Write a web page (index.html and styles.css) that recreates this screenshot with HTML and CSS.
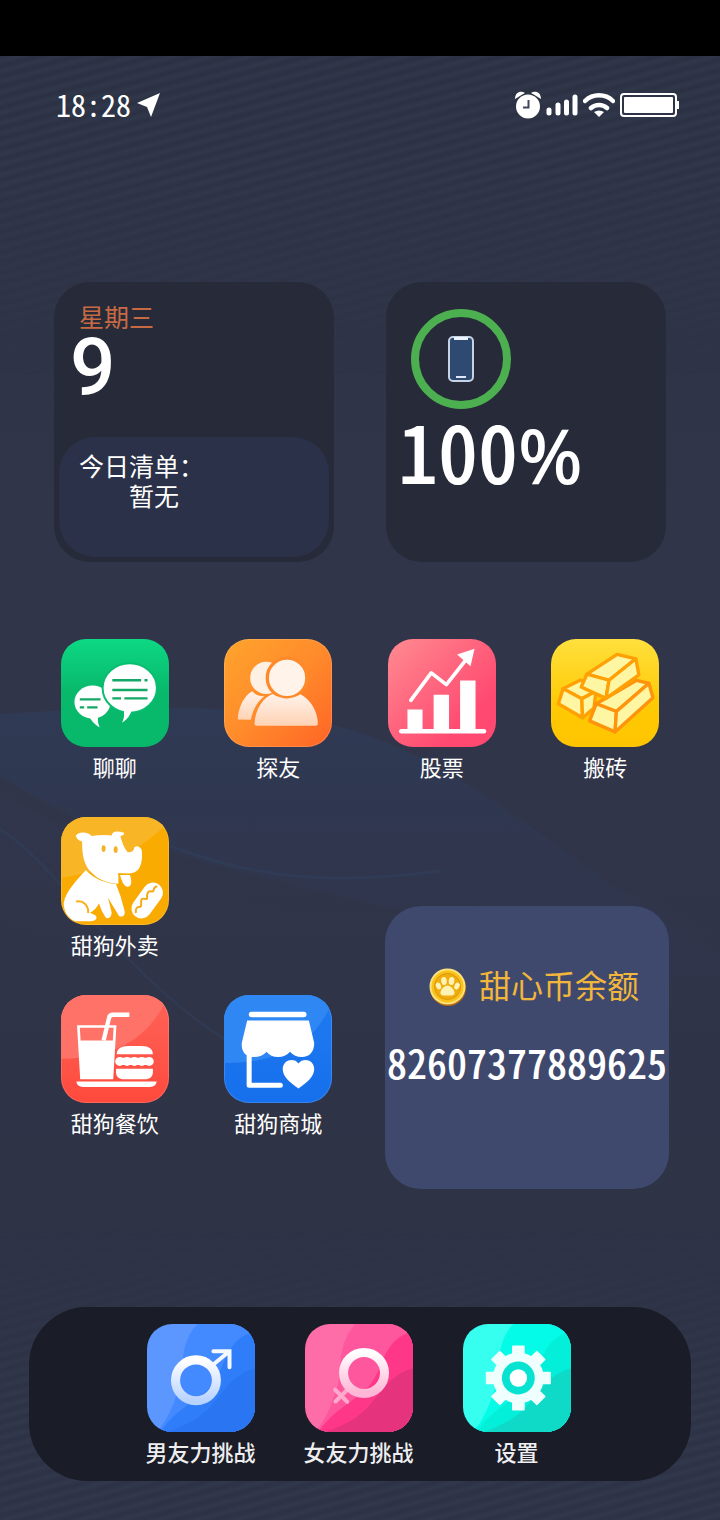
FILE: index.html
```
<!DOCTYPE html>
<html lang="zh-CN">
<head>
  <meta charset="UTF-8">
  <meta name="viewport" content="width=device-width, initial-scale=1.0">
  <title>手机桌面</title>
  <link rel="stylesheet" href="styles.css">
</head>
<body>
  <div class="notch"></div>
  <div class="screen">
    <!-- wallpaper -->
    <svg class="waves" viewBox="0 0 720 1464" preserveAspectRatio="none" aria-hidden="true">
      <defs>
        <linearGradient id="wave" x1="0" y1="0" x2="0" y2="1">
          <stop offset="0" stop-color="#2c4163" stop-opacity=".4"/>
          <stop offset="1" stop-color="#2c3a5c" stop-opacity="0"/>
        </linearGradient>
      </defs>
      <path d="M0 658C120 652 270 640 380 684S560 800 720 900V960C520 850 180 840 0 720Z" fill="url(#wave)"/>
      <path d="M0 735C110 800 230 870 390 860S580 790 720 880V1000C480 940 260 1040 0 860Z" fill="url(#wave)" opacity=".25"/>
      <path d="M0 773C60 810 120 920 235 990" fill="none" stroke="#34547a" stroke-opacity=".18" stroke-width="3"/>
      <path d="M170 790C260 825 340 828 440 815" fill="none" stroke="#34547a" stroke-opacity=".18" stroke-width="3"/>
    </svg>

    <header class="status">
      <span class="time">18:28</span>
      <svg class="locate" width="24" height="24" viewBox="0 0 24 24"><path d="M23 0 0 10l10 4 4 10z" fill="#fff"/></svg>
      <div class="signals">
        <svg width="26" height="28" viewBox="0 0 26 28">
          <path d="M0 8C0 1 6-1 10 2zM26 8C26 1 20-1 16 2z" fill="#fff"/>
          <circle cx="13" cy="15.500" r="13" fill="#2d3243"/>
          <circle cx="13" cy="15.500" r="12" fill="#fff"/>
          <path d="M13.500 9v7.500H8" fill="none" stroke="#42475b" stroke-width="2"/>
        </svg>
        <svg width="32" height="24" viewBox="0 0 32 24" stroke="#fff" stroke-width="5" stroke-linecap="round">
          <path d="M3 17v3M12 12v8M20.500 9v11M29 4v16"/>
        </svg>
        <svg width="32" height="26" viewBox="0 0 32 26">
          <path d="M2 9a20 20 0 0 1 28 0M8 16a12 12 0 0 1 16 0" fill="none" stroke="#fff" stroke-width="4.500" stroke-linecap="round"/>
          <path d="m16 25-5-5q5-3 10 0z" fill="#fff"/>
        </svg>
        <svg width="60" height="24" viewBox="0 0 60 24">
          <rect x="1" y="1" width="55" height="22" rx="3" fill="none" stroke="#fff" stroke-width="2"/>
          <rect x="4" y="4" width="49" height="16" rx="1" fill="#fff"/>
          <path d="M57 8h2v8h-2z" fill="#fff"/>
        </svg>
      </div>
    </header>

    <section class="widgets">
      <div class="card">
        <div class="weekday">星期三</div>
        <div class="day">9</div>
        <div class="todo">
          <div>今日清单：</div>
          <div class="todo-item">暂无</div>
        </div>
      </div>
      <div class="card">
        <div class="ring">
          <svg width="26" height="46" viewBox="0 0 26 46">
            <rect x="1" y="1" width="24" height="44" rx="4" fill="#2f4a70" stroke="#c5d3e5" stroke-width="2"/>
            <path d="M6 2.500h14" stroke="#eef4ff" stroke-width="3"/>
            <path d="M8 41h10" stroke="#dce9fa" stroke-width="2"/>
          </svg>
        </div>
        <div class="percent">100<span class="sign">%</span></div>
      </div>
    </section>

    <main class="apps">
      <button class="app">
        <svg class="tile green" viewBox="64 57 322 322">
          <ellipse cx="158" cy="245" rx="54" ry="49" fill="#fff"/>
          <path d="M148 288q8 18 31 33-7-17-5-35z" fill="#fff"/>
          <ellipse cx="269" cy="203" rx="81" ry="74" fill="#fff" stroke="#09bd70" stroke-width="6"/>
          <path d="M250 264q6 22-4 43 24-15 30-41z" fill="#fff"/>
          <path d="M217 180h86M313 180h9M217 209h105M217 234h26M253 234h69M120 237h62M120 261h13M142 261h31" stroke="#14a765" stroke-width="7"/>
        </svg>
        <span>聊聊</span>
      </button>
      <button class="app">
        <svg class="tile orange" viewBox="552 57 322 322">
          <defs>
            <linearGradient id="body" x1="0" y1="0" x2="0" y2="1">
              <stop offset="0" stop-color="#fff3ea"/>
              <stop offset="1" stop-color="#ffd2b4"/>
            </linearGradient>
          </defs>
          <circle cx="678" cy="173" r="48" fill="#fff0e4"/>
          <path d="M593 297c2-42 22-72 43-84 9 10 19 15 36 15-22 17-35 42-40 70z" fill="url(#body)"/>
          <circle cx="740" cy="173" r="59" fill="#fff3ea" stroke="#ff8a2c" stroke-width="10"/>
          <path d="M643 310c2-44 26-79 54-89q43 26 83 1c33 17 52 56 52 88q0 6-8 6H650q-7 0-7-6z" fill="url(#body)"/>
        </svg>
        <span>探友</span>
      </button>
      <button class="app">
        <svg class="tile rose" viewBox="57 57 322 322">
          <path d="M115 267h45v62h-45zM193 223h46v106h-46zM272 181h46v148h-46z" fill="#fff"/>
          <path d="M97 332h246" stroke="#fff" stroke-width="14" stroke-linecap="round"/>
          <path d="m125 240 61-82 45 35 63-80" fill="none" stroke="#fff" stroke-width="11" stroke-linecap="round" stroke-linejoin="round"/>
          <path d="m315 86-52 17 40 35z" fill="#fff"/>
        </svg>
        <span>股票</span>
      </button>
      <button class="app">
        <svg class="tile gold" viewBox="543 57 322 322" fill="#fff6a3" stroke="#ffa005" stroke-width="10" stroke-linejoin="round">
          <path d="m579 205 52-26 44 34-40 22z"/>
          <path d="m579 205 56 30 2 57-72-42z"/>
          <path d="m635 235 42-22-6 50-34 29z"/>
          <g stroke="#ff930c">
            <path d="m678 250 120-70 37 9-97 84z"/>
            <path d="m678 250 60 23-4 61-76-33z"/>
            <path d="m738 273 97-84 12 43-113 102z"/>
          </g>
          <path d="m650 162 90-59 56 13-80 64z"/>
          <path d="m650 162 66 18-9 54-74-34z"/>
          <path d="m716 180 80-64 9 48-98 70z"/>
        </svg>
        <span>搬砖</span>
      </button>
      <button class="app">
        <svg class="tile amber" viewBox="64 51 322 322">
          <path d="M64 51h322v19C260 170 215 210 64 232z" fill="#f8b626"/>
          <path d="M108 106q12-14 38-6l10 8q30-6 59-2 2-18 37-8 2 7-11 10c7 25 12 37 22 48 12 1 19-5 20-15q11-7 21 6c4 24 1 44-8 58-13 17-36 16-61 14v31c-32-1-58-10-81-34-20-20-28-50-27-92q-15-3-19-18z" fill="#fff"/>
          <path d="m237 221 34 1c10 28 2 39-8 40-14-2-19-17-26-41z" fill="#fff" stroke="#faab02" stroke-width="4"/>
          <path d="M138 210c27 26 52 37 90 41q16 38 26 82c1 16-10 17-17 13l-33-54 11 44c-1 18-13 19-18 15q-13-20-20-43c-8 16-16 23-27 28l17 9c8 10-2 17-14 17h-46c-23-10-35-31-35-54 6-34 38-68 66-98z" fill="#fff"/>
          <path d="M111 303c20-4 35 13 34 32" fill="none" stroke="#f9b01c" stroke-width="6" stroke-linecap="round"/>
          <ellipse cx="191" cy="145" rx="6" ry="10" fill="#f6b226"/>
          <ellipse cx="227" cy="148" rx="6" ry="10" fill="#f6b226"/>
          <rect x="262" y="270" width="118" height="60" rx="30" transform="rotate(-54 321 300)" fill="#fff"/>
          <path d="M287 335c-1-26 16-8 16-22s-2-20 10-18 6-2 8-12 5-12 14-10 1-12 14-15" fill="none" stroke="#f5ab17" stroke-width="6" stroke-linecap="round"/>
        </svg>
        <span>甜狗外卖</span>
      </button>
      <button class="app food">
        <svg class="tile red" viewBox="64 42 322 322">
          <path d="M64 42h322c-30 60-90 190-322 190z" fill="#ff7267"/>
          <path d="m116 136 9 153h91l9-153z" fill="none" stroke="#fff" stroke-width="8"/>
          <path d="M119 178h103l-5 112h-92z" fill="#fff"/>
          <path d="m191 178 16-67q2-10 12-10h49" fill="none" stroke="#fff" stroke-width="13"/>
          <path d="M230 219c0-17 14-25 34-25h40c22 0 34 9 34 25zM228 262h110v10c0 13-10 21-24 21h-62c-15 0-24-8-24-21z" fill="#fff"/>
          <path d="M238 240h88" stroke="#fff" stroke-width="22"/>
          <path d="M239 240h89" stroke="#fff" stroke-width="27" stroke-linecap="round" stroke-dasharray="0 22"/>
          <path d="M110 300h239c-1 10-8 16-20 16H130c-12 0-19-6-20-16z" fill="#fff"/>
        </svg>
        <span>甜狗餐饮</span>
      </button>
      <button class="app mall">
        <svg class="tile blue" viewBox="552 42 322 322">
          <path d="M552 42h322v20C820 200 700 245 552 245z" fill="#2f87f3"/>
          <path d="M634 100h156" stroke="#fff" stroke-width="16" stroke-linecap="round"/>
          <path d="M621 118h184l16 67c0 26-14 42-37 42q-22 0-35-16-14 16-36 16t-34-16q-14 16-38 16c-26 0-38-18-36-42z" fill="#fff"/>
          <path d="M627 220v91h93" fill="none" stroke="#fff" stroke-width="15" stroke-linecap="round" stroke-linejoin="round"/>
          <path d="M774 321c-25-17-47-35-47-58 0-28 34-36 47-17 14-19 47-11 47 17 0 23-22 41-47 58z" fill="#fff"/>
        </svg>
        <span>甜狗商城</span>
      </button>

      <div class="balance">
        <div class="balance-title">
          <svg width="38" height="38" viewBox="0 0 38 38">
            <circle cx="19" cy="20" r="18" fill="#b46a12"/>
            <circle cx="18.500" cy="18.500" r="18" fill="#fde27a"/>
            <circle cx="18.500" cy="18.500" r="16" fill="#f8c21b"/>
            <circle cx="18.500" cy="18.500" r="13" fill="#f0ad0e" stroke="#dd930c"/>
            <g fill="#fff2b5">
              <ellipse cx="9.500" cy="18" rx="2.500" ry="3.500" transform="rotate(-25 9.500 18)"/>
              <ellipse cx="15" cy="13" rx="2.800" ry="4" transform="rotate(-8 15 13)"/>
              <ellipse cx="22.500" cy="13" rx="2.800" ry="4" transform="rotate(8 22.500 13)"/>
              <ellipse cx="28" cy="18" rx="2.500" ry="3.500" transform="rotate(25 28 18)"/>
              <path d="M18.500 17.500c3 0 7 4 7 7.500 0 3-4 2.500-7 2.500s-7 .5-7-2.500c0-3.500 4-7.500 7-7.500z"/>
            </g>
          </svg>
          <span>甜心币余额</span>
        </div>
        <div class="balance-value">82607377889625</div>
      </div>
    </main>

    <nav class="dock">
      <button class="app">
        <svg class="tile boy" viewBox="0 0 322 322">
          <defs>
            <linearGradient id="boyRing" x1="0" y1="0" x2="0" y2="1">
              <stop offset="0" stop-color="#fff"/>
              <stop offset="1" stop-color="#b9d3ff"/>
            </linearGradient>
            <path id="bandA" d="M150 0C85 70 120 150 85 220 70 265 50 300 30 322H322V0Z"/>
            <path id="bandB" d="M322 22C215 50 245 150 165 210 110 250 75 270 40 322H322Z"/>
            <path id="bandC" d="M322 133C240 150 215 240 150 280Q110 305 60 322H322Z"/>
          </defs>
          <use href="#bandA" fill="#4389ff"/>
          <use href="#bandB" fill="#307df9"/>
          <use href="#bandC" fill="#2975f2"/>
          <circle cx="146" cy="168" r="61" fill="none" stroke="url(#boyRing)" stroke-width="27"/>
          <path d="m195 123 50-41M198 81h48v48" fill="none" stroke="#f4f8ff" stroke-width="12" stroke-linecap="round"/>
        </svg>
        <span>男友力挑战</span>
      </button>
      <button class="app">
        <svg class="tile girl" viewBox="0 0 322 322">
          <defs>
            <linearGradient id="girlRing" x1="0" y1="0" x2="0" y2="1">
              <stop offset="0" stop-color="#fff"/>
              <stop offset="1" stop-color="#ffb5d5"/>
            </linearGradient>
          </defs>
          <use href="#bandA" fill="#ff579d"/>
          <use href="#bandB" fill="#ff3788"/>
          <use href="#bandC" fill="#e5347d"/>
          <path d="m131 191-40 40M90 196l36 36" stroke="#ffa9cd" stroke-width="12" stroke-linecap="round"/>
          <circle cx="176" cy="146" r="61" fill="none" stroke="url(#girlRing)" stroke-width="27"/>
        </svg>
        <span>女友力挑战</span>
      </button>
      <button class="app">
        <svg class="tile mint" viewBox="0 0 322 322">
          <defs>
            <path id="teeth" d="M146 94V66q0-2 3-2h32q3 0 3 2v28zM146 228v28q0 2 3 2h32q3 0 3-2v-28zM98 142H70q-2 0-2 3v32q0 3 2 3h28zM232 142h28q2 0 2 3v32q0 3-2 3h-28z"/>
          </defs>
          <use href="#bandA" fill="#04fbe7"/>
          <use href="#bandB" fill="#03efda"/>
          <use href="#bandC" fill="#0fdac8"/>
          <g fill="#effffd">
            <use href="#teeth"/>
            <use href="#teeth" transform="rotate(45 165 161)"/>
            <circle cx="165" cy="161" r="76"/>
          </g>
          <circle cx="165" cy="161" r="49" fill="#07e3d0"/>
          <circle cx="165" cy="161" r="26" fill="#fff"/>
        </svg>
        <span>设置</span>
      </button>
    </nav>
  </div>
</body>
</html>
```

FILE: styles.css
```
* { box-sizing: border-box; }
body {
  margin: 0;
  min-height: 100vh;
  display: flex;
  flex-direction: column;
  font-family: "Liberation Sans", "Noto Sans CJK SC", sans-serif;
  background-color: #2e3346;
  color: white;
}
.notch {
  height: 56px;
  background-color: #000;
}
.screen {
  flex: 1;
  display: flex;
  flex-direction: column;
  position: relative;
  isolation: isolate;
  background: linear-gradient(#2b3142, #31354a 30%, #31354a 50%, #2e3346 75%, #2d3245);
}
/* fine diagonal lines, fading out towards the middle */
.screen::before {
  content: "";
  position: absolute;
  inset: 0;
  z-index: -1;
  background: repeating-linear-gradient(165deg, rgba(80, 95, 125, 0) 0, rgba(80, 95, 125, 0.14) 5px, rgba(80, 95, 125, 0) 10px);
  mask-image: linear-gradient(#000 8%, transparent 22%, transparent 80%, #000 92%);
}
.waves {
  position: absolute;
  inset: 0;
  width: 100%;
  height: 100%;
  z-index: -1;
}
.status {
  display: flex;
  align-items: center;
  height: 98px;
  padding: 0 40px 0 56px;
}
.time, .percent, .balance-value {
  font-family: "Noto Sans CJK SC", sans-serif;
  font-feature-settings: "hwid";
}
.time {
  font-size: 30px;
  line-height: 40px;
  padding-bottom: 2px;
}
.locate {
  margin-left: 6px;
}
.signals {
  margin-left: auto;
  display: flex;
  align-items: center;
  gap: 5px;
}
.widgets {
  display: flex;
  justify-content: center;
  gap: 52px;
  margin-top: 128px;
}
.card {
  display: flex;
  flex-direction: column;
  width: 280px;
  height: 280px;
  border-radius: 36px;
  background-color: #272a38;
}
.weekday {
  margin: 21px 25px 0;
  font-size: 25px;
  line-height: 30px;
  color: #c76a43;
}
.day {
  padding-left: 16px;
  font-family: Roboto, sans-serif;
  font-size: 80px;
  font-weight: 500;
  line-height: 70px;
}
.todo {
  height: 120px;
  margin: auto 5px 5px;
  padding: 15px 20px;
  border-radius: 36px;
  background-color: #2b3148;
  font-size: 25px;
  line-height: 30px;
}
.todo-item {
  padding-left: 2em;
}
.ring {
  display: flex;
  align-items: center;
  justify-content: center;
  width: 100px;
  height: 100px;
  margin: 27px 25px 0;
  border: 8px solid #4caf50;
  border-radius: 50%;
}
.percent {
  padding-left: 12px;
  font-size: 80px;
  font-weight: 500;
  line-height: 80px;
}
.sign {
  font-family: "Noto Sans", sans-serif;
  font-size: 76px;
}
.apps {
  display: grid;
  grid-template-columns: repeat(4, 1fr);
  grid-template-rows: 178px 178px auto;
  align-items: start;
  margin: 77px 33px 0;
}
.app {
  display: flex;
  flex-direction: column;
  align-items: center;
  gap: 6px;
  padding: 0;
  border: none;
  background: none;
  color: white;
  font-family: inherit;
  font-size: 22px;
  line-height: 32px;
  white-space: nowrap;
  cursor: pointer;
}
.tile {
  width: 108px;
  height: 108px;
  border-radius: 25px;
}
.food {
  grid-area: 3 / 1;
}
.mall {
  grid-area: 3 / 2;
}
.green { background: linear-gradient(#0dd884, #08b86b 50%, #08b86b); }
.orange { background: linear-gradient(135deg, #ffa42c, #ff8b2b 50%, #ff6426); }
.rose { background: linear-gradient(135deg, #ff8b91, #ff4970 75%); }
.gold { background: linear-gradient(#ffe03d, #ffca05 60%, #ffc400); }
.amber { background: #faab02; }
.red { background: linear-gradient(#ff6358, #ff4a3d); }
.blue { background: linear-gradient(#1f7bf1, #166fec); }
.boy { background: #5b97ff; }
.girl { background: #ff6da9; }
.mint { background: #36fff0; }
.orange, .amber, .red, .blue {
  box-shadow: 0 0 0 1px rgba(255, 255, 255, 0.15) inset;
}
.balance {
  grid-column: 3 / 5;
  grid-row: 2 / 4;
  justify-self: center;
  width: 284px;
  height: 283px;
  margin-top: 89px;
  margin-left: 7px;
  padding-top: 60px;
  border-radius: 36px;
  background-color: #3f496e;
}
.balance-title {
  display: flex;
  align-items: center;
  gap: 12px;
  padding-left: 44px;
  font-size: 32px;
  line-height: 42px;
  color: #f1b63b;
}
.balance-value {
  margin-top: 24px;
  font-size: 40px;
  font-weight: 500;
  line-height: 60px;
  text-align: center;
}
.dock {
  display: flex;
  justify-content: center;
  margin: auto 29px 39px;
  padding: 17px 3px 11px 0;
  border-radius: 58px;
  background-color: rgba(21, 23, 31, 0.8);
}
.dock .app {
  width: 158px;
  font-weight: 500;
  color: #eeeef0;
}
```
